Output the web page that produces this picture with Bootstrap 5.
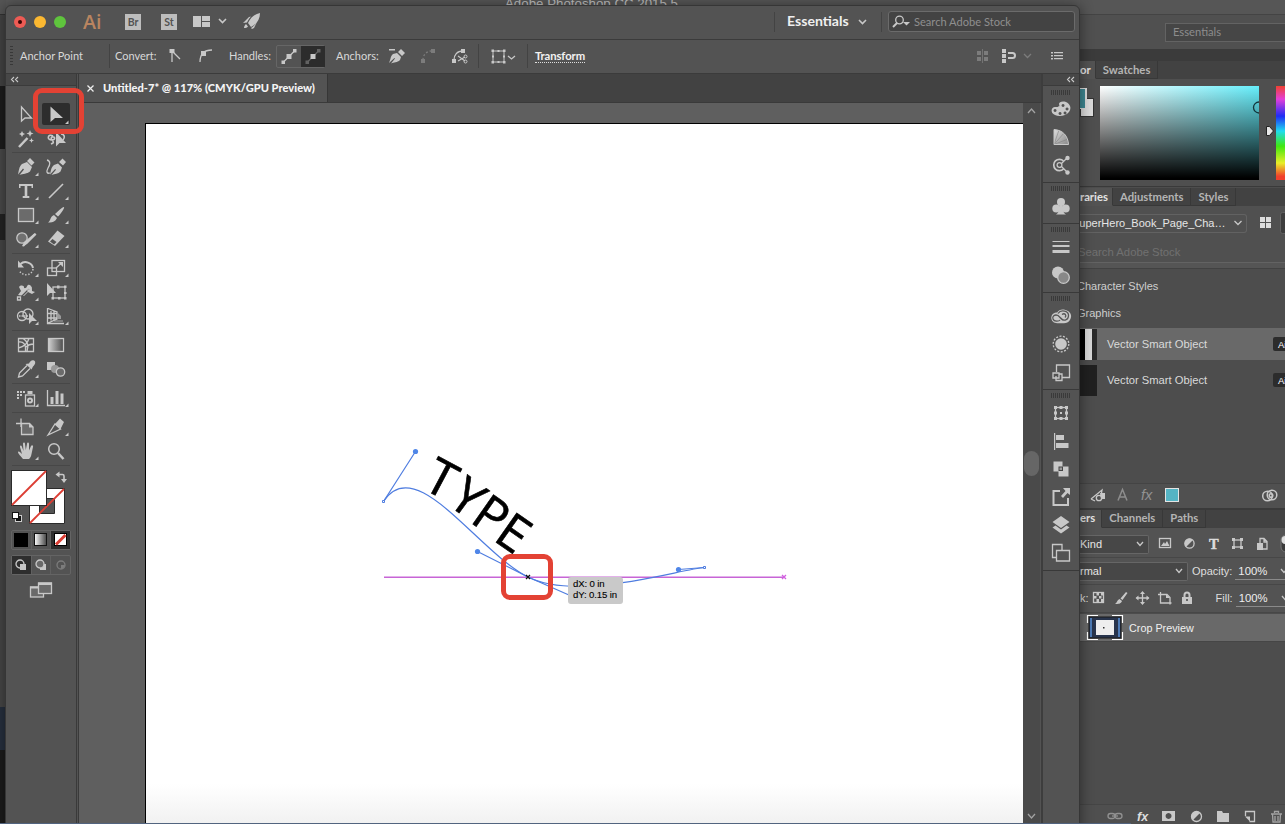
<!DOCTYPE html>
<html lang="en">
<head>
<meta charset="utf-8">
<meta name="viewport" content="width=device-width, initial-scale=1">
<title>Untitled-7</title>
<link rel="stylesheet" href="https://cdn.jsdelivr.net/npm/bootstrap@5.3.0/dist/css/bootstrap.min.css">
<style>
:root{--ink:#c8c8c8;--panel:#535353;--dark:#424242;--line:#3b3b3b}
html,body{height:100%}
body{background:#4b4b4b;font-family:Lato,"Open Sans",sans-serif;font-size:11.3px;line-height:14px;color:#dedede;overflow:hidden;position:relative;margin:0}
svg{display:block;flex:none;overflow:visible}
svg.ic{fill:var(--ink);stroke:none}
.s{fill:none;stroke:var(--ink);stroke-width:1.3}
.s2{fill:none;stroke:var(--ink);stroke-width:2}
.bgf{fill:var(--panel)}
.dim{opacity:.35}
.no-shrink>*{flex:none}
/* windows */
.back-win{position:absolute;inset:0}
.front-win{position:absolute;left:5px;top:5px;width:1075px;height:830px;background:var(--panel);border:1px solid #363636;border-radius:6px 6px 0 0;box-shadow:0 0 14px rgba(0,0,0,.45);overflow:hidden}
.bluebar{position:absolute;left:0;top:823px;width:1131px;height:1px;background:#52647f}
/* left sliver */
.sliver{width:6px}
.sliver div{flex:none}
.k1{height:14px;background:#565656}.k2{height:72px;background:#444;border-top:1px solid #333}.k3{height:63px;background:#1d1d1d}.k4{height:65px;background:#4b4b4b}.k5{height:26px;background:#242424}.k6{height:467px;background:#474747}.k7{height:43px;background:#27303f}.k8{height:74px;background:#1c1c1c}
/* title bar */
.titlebar{height:34px;border-bottom:1px solid var(--line);padding-bottom:1px}
.dot{width:12px;height:12px;border-radius:50%;margin-right:8px}
.dot.r{background:#ee5b54;margin-left:8px;display:flex;align-items:center;justify-content:center}
.dot.r::after{content:"";width:4px;height:4px;border-radius:50%;background:#3a0503}
.dot.y{background:#fbb831}.dot.g{background:#5fc43d}
.ai{font:600 20.5px/20px "Open Sans",sans-serif;color:#b98560;width:20px;margin-left:9px;margin-top:-3px;transform:scaleX(.96);transform-origin:0 50%}
.appbox{width:16px;height:16px;background:#bdbdbd;color:#535353;font:700 10.5px/17px Lato,sans-serif;text-align:center;margin-top:-1px}
.m-br{margin-left:22px}.m-st{margin-left:20px}.m-lay{margin-left:16px;margin-top:-3px}.m-chev{margin-left:8px;margin-top:-2px}.m-rk{margin-left:15px;margin-top:-2px}
.vsep{width:1px;height:20px;background:#434343}
.vsep.tall{height:24px}
.m-s1{margin-left:513px}
.ess{font-weight:700;font-size:14.1px;margin-left:12px;width:64px;color:#efefef;margin-top:-2px}
.m-c2{margin-left:7px}.m-s2{margin-left:14px}
.stock{width:187px;height:21px;border:1px solid #6b6b6b;border-radius:3px;background:#434343;margin-left:6px;color:#8f8f8f;padding-left:4px;margin-top:-1px}
.stock span{margin-left:4px;font-size:11.1px}
/* control bar */
.ctl{height:34px;border-bottom:1px solid var(--line);color:#d8d8d8;font-size:11.2px;padding-bottom:1px}
.grip-v{width:3px;height:20px;margin-left:4px;background:repeating-linear-gradient(#383838 0 1px,transparent 1px 3px)}
.c-ap{margin-left:7px;width:89px;font-size:11px}.c-cv{margin-left:5px;width:51px;font-size:11px}.c-i1{margin-left:2px}.c-i2{margin-left:13px}.c-hd{margin-left:14px;width:47px;font-size:11px}
.toggle{width:49px;height:23px;border:1px solid #666;border-radius:2px;margin-left:0}
.toggle div{width:24px;height:21px}
.toggle .on{background:#2c2c2c}
.c-an{margin-left:11px;width:51px;font-size:11px}.c-p{margin-left:1px}.c-d{margin-left:14px}.c-sc{margin-left:15px}.c-s3{margin-left:10px}.c-bx{margin-left:11px}.c-s4{margin-left:11px}
.c-tr{margin-left:7px;color:#f2f2f2;font-weight:700;font-size:11.3px;line-height:13px;border-bottom:1px dotted #ddd;letter-spacing:-.1px}
.c-g{margin-left:390px}.c-mg{margin-left:11px}.c-ch{margin-left:6px}.c-mn{margin-left:19px}
/* tools */
.tools{width:71px;border-right:1px solid #3a3a3a;flex:none}
.strip-head{height:12px;background:#474747;border-bottom:1px solid var(--line);flex:none}
.tools .grp{display:grid;grid-template-columns:30px 30px;grid-auto-rows:24px;margin-left:5px}
.tools .rule{height:1px;margin:2px 6px;background:#474747;flex:none}
.tools .first{margin-top:17px;margin-bottom:-1px}
.swapbox{margin:2px 0 0 5px}
.modes{width:60px;height:20px;margin:6px 0 0 5px;border:1px solid #646464;border-radius:2px}
.modes>div{width:19.33px;flex:1;display:flex;align-items:center;justify-content:center}
.modes>div+div{border-left:1px solid #606060}
.modes .sel{background:#2e2e2e}
.modes.draws{margin-top:5px}
/* document */
.docs{width:963px;border-left:1px solid #3a3a3a;margin-left:1px;flex:none}
.tabbar{height:29px;background:var(--dark);border-bottom:1px solid #3a3a3a;flex:none}
.doctab{width:249px;background:var(--panel);border-right:1px solid #363636;font-weight:700;font-size:11.1px;color:#f4f4f4;padding-left:8px}
.doctab b{margin-left:9px;white-space:nowrap}
.paste{background:#5f5f5f;padding:20px 0 0 66px}
.artboard{width:878px;height:701px;background:linear-gradient(#fff 660px,#f1f1f1 100%);border-left:1px solid #000;border-top:1px solid #000;flex:none}
.vscroll{width:17px;background:#4a4a4a;flex:none;padding-bottom:14px}
.thumb{width:15px;height:25px;border-radius:8px;background:#666}
/* dock */
.dock{width:39px;border-left:2px solid #3d3d3d;flex:none}
.dock .grp{border-bottom:1px solid #393939;padding:0 0 3px}
.grip-h{height:5px;width:20px;margin:3px 8px 1px;background:repeating-linear-gradient(90deg,#3a3a3a 0 1px,transparent 1px 2px)}
.dock .grp svg.ic{margin:0 0 0 4px}
.overlay{position:absolute;left:0;top:0}
.tip{position:absolute;left:568px;top:577px;width:55px;height:27px;background:#c9c9c9;border-radius:3px;color:#000;font:9.6px/11px "Liberation Sans",sans-serif;padding:1px 5px;white-space:nowrap;letter-spacing:-.12px;-webkit-text-stroke:.1px #000}
.halo{position:absolute;border:5px solid #e34234;border-radius:9px}
.h1x{left:33px;top:88px;width:51px;height:46px}
.h2x{left:501px;top:554px;width:52px;height:46px}
/* photoshop panels */
.ps{margin-left:1080px;width:205px;height:824px;font-family:"Liberation Sans",sans-serif;font-size:11px;background:#4d4d4d;overflow:hidden}
.ps>div,.ps>div>*{flex:none}
.ps .tabs{height:18px;background:#424242;font:700 11.3px/17px Lato,sans-serif;color:#b4b4b4}
.ps .tabs span{padding:0 7px;border-right:1px solid #383838;border-bottom:1px solid #383838}
.ps .tabs span.act{background:#535353;border-bottom-color:#535353;color:#e4e4e4;padding:0 4px 0 0}
.ps .tabs span.act.lib{padding-right:4px}
.ps .tabs span.act.lay{padding-right:6px}
.ps .tabs.low{line-height:15px}
.ps-title{height:15px;background:#565656;border-bottom:1px solid #444}
.ps-opt{height:34px;background:#505050;padding:8px 0 0 85px}
.ps-opt div{height:19px;border:1px solid #636363;background:#464646;color:#8d8d8d;width:130px;padding:0 7px;font:11.2px/16px Lato,sans-serif}
.ps-gap{height:12px;background:#3b3b3b}
.ps-color{height:108px;background:#4f4f4f;border-bottom:1px solid #3a3a3a}
.chips{width:14px;height:94px}
.chip1{width:7px;height:21px;margin-top:9px;background:#3e8893;border:solid #ddd;border-width:1px 2px 1px 0}
.chip2{width:14px;height:19px;margin-top:-11px;background:#dcdcdc;border:1px solid #333;position:relative;z-index:-1}
.field{width:159px;height:94px;margin:7px 0 0 6px;background:linear-gradient(to top,#000 2%,transparent),linear-gradient(90deg,#fff,#66eefb)}
.hue{width:12px;height:94px;margin:7px 0 0 7px;background:linear-gradient(#ef4130,#e33fd8 14%,#1f2cf5 32%,#20dcf0 48%,#3fe810 64%,#e8ee28 82%,#f0402c 96%)}
.libtabs{margin-top:1px}
.lib-top{height:34px;background:#505050}
.lib-sel{width:167px;height:19px;border:1px solid #626262;border-left:0;border-radius:0 3px 3px 0;color:#e6e6e6;font-size:11px;white-space:nowrap}
.lib-sel span{width:154px;margin-left:-8px}
.lib-search{height:23px;color:#707070;border-bottom:1px solid #636363;padding:5px 0 0 0;background:#505050;font-size:11.3px;text-indent:-2px}
.lib-gap{height:6px;background:#555;border-bottom:1px solid #424242}
.lib-h{height:27px;line-height:27px;margin-left:-3px;font-size:11px;color:#cfcfcf}
.lib-h.a{height:31px;line-height:34px}
.lrow{height:36px;font-size:11.2px;color:#dadada}
.lrow.hi{height:32px;background:#696969;margin:1px 0 2px}
.lrow .nm{margin-left:10px;width:166px}
.lrow .tag{width:20px;height:14px;background:#2c2c2c;border-radius:2px;font:9.5px/15px "Liberation Sans",sans-serif;padding-left:5px;color:#fff}
.th1{width:17px;height:31px;background:linear-gradient(90deg,#000 5px,#d9d9d9 5px 12px,#2b2b2b 12px)}
.th2{width:17px;height:31px;background:#202020}
.ps-blank{height:86px;border-bottom:1px solid #444}
.ps-foot{height:26px;background:#505050;border-bottom:2px solid #3a3a3a}
.pr{height:27px;background:#535353;border-bottom:1px solid #474747}
.pr .selbox{height:19px;background:#474747;border:1px solid #666;border-left:0;border-radius:0 2px 2px 0;line-height:17px;color:#e8e8e8}
.pr.kind{height:30px;padding-top:3px}
.pr.lock{height:28px;padding-bottom:1px}
.kindbox{width:69px}.nrmbox{width:108px}
.val{border-bottom:1px solid #8a8a8a;width:52px;height:17px;margin-left:3px;padding-left:3px;font-size:11.3px;line-height:16px;color:#eee}
.layer{height:28px;background:#696969;border-bottom:1px solid #464646;color:#f0f0f0;margin-top:1px;font-size:10.8px}
.layer span{margin-left:6px}
.cropth{width:36px;height:25px;margin-left:7px}
.ps-last{height:20px;border-top:1px solid #454545;background:#4f4f4f}
.ps-space{height:162px}
.top-cap{position:absolute;left:505px;top:-4px;font:13.3px/16px "Liberation Sans",sans-serif;color:#c4c4c4}
.top-strip{position:absolute;left:0;top:0;width:1285px;height:15px;background:#595959}
</style>
</head>
<body>
<div class="back-win d-flex">
  <div class="top-strip"></div>
  <div class="sliver d-flex flex-column position-absolute"><div class="k1"></div><div class="k2"></div><div class="k3"></div><div class="k4"></div><div class="k5"></div><div class="k6"></div><div class="k7"></div><div class="k8"></div></div>
  <div class="top-cap">Adobe Photoshop CC 2015.5</div>

  <div class="ps d-flex flex-column position-relative">
    <div class="ps-title"></div>
    <div class="ps-opt"><div>Essentials</div></div>
    <div class="ps-gap"></div>
    <div class="tabs d-flex"><span class="act">or</span><span>Swatches</span></div>
    <div class="ps-color d-flex position-relative z-0">
      <div class="chips"><div class="chip1"></div><div class="chip2"></div></div>
      <div class="field"></div>
      <svg class="ic" width="10" height="108"><path d="M7.500 47.500h3l4 4.500l-4 4.500h-3z" fill="#e6e6e6" stroke="#222"/><path d="M0 23a5.500 5.500 0 0 0 0 11" fill="none" stroke="#12343a" stroke-width="1.300"/></svg>
      <div class="hue"></div>
    </div>
    <div class="tabs libtabs d-flex"><span class="act lib">raries</span><span>Adjustments</span><span>Styles</span></div>
    <div class="lib-top d-flex align-items-center">
      <div class="lib-sel d-flex align-items-center"><span>SuperHero_Book_Page_Cha…</span><svg class="ic ms-2" width="8" height="8"><path class="s" d="M.5 2l3.500 3.500L7.500 2"/></svg></div>
      <svg class="ic ms-2" width="24" height="14"><path d="M5 1h5v5H5zM11 1h5v5h-5zM5 7h5v5H5zM11 7h5v5h-5z" fill="#dcdcdc"/></svg>
      <svg width="10" height="24"><rect x="1.500" y="1.500" width="20" height="21" rx="2" fill="#3d3d3d" stroke="#606060"/></svg>
    </div>
    <div class="lib-search">Search Adobe Stock</div>
    <div class="lib-gap"></div>
    <div class="lib-h a">Character Styles</div>
    <div class="lib-h">Graphics</div>
    <div class="lrow hi d-flex align-items-center"><div class="th1"></div><div class="nm">Vector Smart Object</div><div class="tag">Ai</div></div>
    <div class="lrow d-flex align-items-center"><div class="th2"></div><div class="nm">Vector Smart Object</div><div class="tag">Ai</div></div>
    <div class="ps-blank"></div>
    <div class="ps-foot d-flex align-items-center">
      <svg class="ic" width="205" height="22" viewBox="1080 485 205 22">
        <path class="s" d="M1091 499l11-9-1 6M1091 499l4 2"/><circle cx="1099" cy="498" r="2.700" class="s"/><path d="M1100 493h5v6h-4z"/>
        <path d="M1118 500.500l4.500-11 4.500 11M1119.500 497h6" fill="none" stroke="#8d8d8d" stroke-width="1.500"/>
        <text x="1141" y="500" font-family="Liberation Sans" font-style="italic" font-size="14.500" fill="#929292">fx</text>
        <rect x="1165.500" y="488.500" width="13" height="13" fill="#55b4c4" stroke="#e4e4e4"/>
        <g class="s2" style="stroke-width:1.500"><circle cx="1267.500" cy="496" r="4.800"/><circle cx="1272" cy="495" r="4.800"/><circle cx="1271" cy="495.500" r="1.800"/></g>
      </svg>
    </div>
    <div class="tabs low d-flex"><span class="act lay">ers</span><span>Channels</span><span>Paths</span></div>
    <div class="pr kind d-flex align-items-center">
      <div class="selbox kindbox d-flex align-items-center justify-content-between pe-1">Kind<svg class="ic" width="8" height="8"><path class="s" d="M1 2l3 3.500L7 2"/></svg></div>
      <svg class="ic" width="136" height="20" viewBox="1149 535 136 20">
        <rect class="s" x="1159.500" y="539.500" width="11" height="9"/><path d="M1161 547l3-4 1 2 2-3 2.500 5z"/>
        <circle cx="1189.500" cy="544.500" r="4.600" class="s"/><path d="M1186 548a5 5 0 0 1 0-7 5 5 0 0 1 7 0z"/>
        <text x="1209" y="549.500" font-family="Liberation Serif" font-weight="700" font-size="14.500" fill="#ddd" stroke="#ddd" stroke-width=".4">T</text>
        <rect class="s" x="1234" y="541" width="7" height="7"/><path d="M1232 539h3v3h-3zM1240 539h3v3h-3zM1232 547h3v3h-3zM1240 547h3v3h-3z"/>
        <path class="s" d="M1260 544v-4.500h4l3 3v7.500h-4M1264 540v3h3"/><path d="M1257 544h6v7h-6z"/>
        <rect x="1281" y="536" width="14" height="17" rx="5" fill="#3b3b3b" stroke="#777"/><circle cx="1285.500" cy="541" r="4" fill="#ddd"/>
      </svg>
    </div>
    <div class="pr d-flex align-items-center"><div class="selbox nrmbox d-flex align-items-center justify-content-between pe-1">rmal<svg class="ic" width="8" height="8"><path class="s" d="M1 2l3 3.500L7 2"/></svg></div><span class="ms-1">Opacity:</span><div class="val d-flex justify-content-between">100%<svg class="ic mt-1" width="7" height="8"><path class="s" d="M1 2l3 3.500L7 2"/></svg></div></div>
    <div class="pr lock d-flex align-items-center"><span>k:</span>
      <svg class="ic" width="127" height="20" viewBox="1089 589 127 20">
        <rect class="s" x="1093.500" y="593.500" width="10" height="10"/><path d="M1096.500 594h2.500v2.500h-2.500zM1101 594h2v2.500h-2zM1094 597h2.500v2.500h-2.500zM1099 597h2.500v2.500h-2.500zM1096.500 600h2.500v3h-2.500zM1101 600h2v3h-2z"/>
        <path d="M1126 593l1.500 1-5 7-2-1.500zM1119.500 600l2.500 2c-1 3-4 3-7 3 2-1 2-4 4.500-5z"/>
        <path class="s" d="M1142.500 593v12M1136.500 599h12"/><path d="M1142.500 592l2.500 3h-5zM1142.500 606l2.500-3h-5zM1135.500 599l3-2.500v5zM1149.500 599l-3-2.500v5z"/>
        <path class="s" d="M1160.500 593v11h11M1158 595.500h9l3 3v7"/><path d="M1166 595l4 4h-4z"/>
        <path d="M1182 598h10v7h-10z"/><path class="s2" d="M1184.500 598v-2a2.500 2.500 0 0 1 5 0v2"/><circle cx="1187" cy="601" r="1" fill="#444"/>
      </svg>
      <span>Fill:</span><div class="val d-flex justify-content-between">100%<svg class="ic mt-1" width="7" height="8"><path class="s" d="M1 2l3 3.500L7 2"/></svg></div></div>
    <div class="layer d-flex align-items-center">
      <svg class="cropth" viewBox="0 0 36 25"><rect x="2" y="2" width="32" height="21" fill="#28344c" stroke="#1b1b1b"/><path d="M3 3h2v19H3zM31 3h2v19h-2z" fill="#4d7ab5"/><rect x="9" y="5" width="18" height="15" fill="#eee"/><path d="M16 12h1.500v1.500h-1.500z" fill="#333"/><path d="M.5 8V.5H11M25 .5h10.500V8M35.500 17v7.500H25M11 24.500H.5V17" fill="none" stroke="#fff" stroke-width="1.200"/></svg>
      <span>Crop Preview</span>
    </div>
    <div class="ps-space"></div>
    <div class="ps-last">
      <svg class="ic" width="205" height="19" viewBox="1080 805 205 19">
        <g opacity=".55"><rect class="s" x="1108" y="813.500" width="7" height="5" rx="2.500"/><rect class="s" x="1115" y="813.500" width="7" height="5" rx="2.500"/><path class="s" d="M1112 816h6"/></g>
        <text x="1137" y="820.500" font-family="Liberation Sans" font-style="italic" font-weight="700" font-size="12.500" fill="#ddd">fx</text>
        <path fill-rule="evenodd" d="M1162 811h13v10h-13zM1168.500 813a3 3 0 1 0 .1 0z"/>
        <circle cx="1196.500" cy="816.500" r="5" class="s"/><path d="M1193 820a5 5 0 0 1 0-7 5 5 0 0 1 7 0z"/>
        <path d="M1217 811h5l1 2h6v9h-12z"/>
        <path class="s" d="M1245.500 816v-4.500h9v10h-5"/><path d="M1245 816.500h5v5z"/>
        <g opacity=".7"><path class="s" d="M1271 814h11M1274.500 813v-1.500h4v1.500M1272.500 814l.5 8h7l.5-8M1275 816v5M1278 816v5"/></g>
      </svg>
    </div>
  </div>
</div>

<div class="front-win d-flex flex-column">
  <div class="titlebar d-flex align-items-center no-shrink">
    <div class="dot r"></div><div class="dot y"></div><div class="dot g"></div>
    <div class="ai">Ai</div>
    <div class="appbox m-br">Br</div><div class="appbox m-st">St</div>
    <svg class="ic m-lay" width="17" height="14"><path d="M0 2h8v11H0zM9 2h8v5H9zM9 8h8v5H9z"/></svg>
    <svg class="ic m-chev" width="9" height="8"><path class="s" d="M1 2l3.500 3.500L8 2" style="stroke-width:1.600"/></svg>
    <svg class="ic m-rk" width="19" height="18" viewBox="0 0 19 18"><path d="M18 1c0 6-3 11-9 14L6 11c3-6 7-9 12-10zM7 5L1 11l4-.5c1-2 2-4 4-6zM15 10c-1 2-4 5-6 6l1 1 2-1zM4 12c-1 1-2 2-2 4 2 0 3 0 4-1.500z"/></svg>
    <div class="vsep m-s1"></div>
    <div class="ess">Essentials</div>
    <svg class="ic m-c2" width="9" height="8"><path class="s" d="M1 2l3.500 3.500L8 2" style="stroke-width:1.600"/></svg>
    <div class="vsep m-s2"></div>
    <div class="stock d-flex align-items-center"><svg class="ic" width="17" height="14"><circle cx="6.500" cy="5" r="3.800" class="s"/><path class="s2" d="M4 8l-4 4"/><path d="M10 7h7l-3.500 3.500z"/></svg><span>Search Adobe Stock</span></div>
  </div>

  <div class="ctl d-flex align-items-center no-shrink">
    <div class="grip-v"></div>
    <div class="c-ap">Anchor Point</div><div class="vsep tall"></div>
    <div class="c-cv">Convert:</div>
    <svg class="ic c-i1" width="16" height="16"><path class="s" d="M4 2v12M4 3l8 8"/><path d="M1.500 1h5v4h-5z"/></svg>
    <svg class="ic c-i2" width="18" height="16"><path class="s" d="M3 14c0-8 4-12 12-12"/><path d="M4 3h5v5H4z"/></svg>
    <div class="c-hd">Handles:</div>
    <div class="toggle d-flex"><div><svg class="ic" width="24" height="21" viewBox="-12 -10.500 24 21"><path class="s" d="M-6 6L6-6"/><path d="M-2.500-2.500h5v5h-5zM-7.500 4h3.500v3.500h-3.500zM4-7.500h3.500V-4H4z"/></svg></div><div class="on"><svg class="ic" width="24" height="21" viewBox="-12 -10.500 24 21"><g class="dim"><path class="s" d="M-6 6L6-6"/><path d="M-7.500 4h3.500v3.500h-3.500zM4-7.500h3.500V-4H4z"/></g><path d="M-2.500-2.500h5v5h-5z"/></svg></div></div>
    <div class="c-an">Anchors:</div>
    <svg class="ic c-p" width="18" height="18"><path d="M1 2h6v1.500H1zM1 16c2-4 1-6 4-9l4-1 4 4-1 3c-3 3-6 2-9 3.500l4-5-.6-.6zM10 5l3-3 4 4-3 3z"/></svg>
    <svg class="ic c-d dim" width="16" height="16"><path class="s" d="M3 12c0-5 3-9 9-9" stroke-dasharray="2 2" /><path d="M1 11h4v4H1zM11 1h4v4h-4z"/></svg>
    <svg class="ic c-sc" width="17" height="17"><path class="s" d="M3 12c0-5 3-9 9-9"/><path d="M1 11h4v4H1zM10 1h4v4h-4z"/><path class="s" d="M7 8l7 5M7 13l7-4" style="stroke-width:1.100"/><circle class="s" cx="14.500" cy="8.500" r="1.500" style="stroke-width:1"/><circle class="s" cx="14.500" cy="13.500" r="1.500" style="stroke-width:1"/></svg>
    <div class="vsep tall c-s3"></div>
    <svg class="ic c-bx" width="26" height="16"><rect class="s" x="3" y="3" width="11" height="11" style="stroke-width:1"/><path d="M1.500 1.500H4V4H1.500zM7.500 2h2v2h-2zM13 1.500h2.500V4H13zM2 7.500h2v2H2zM13 7.500h2v2h-2zM1.500 13H4v2.500H1.500zM7.500 13h2v2h-2zM13 13h2.500v2.500H13z"/><path class="s" d="M18 8l3.500 3L25 8"/></svg>
    <div class="vsep tall c-s4"></div>
    <div class="c-tr">Transform</div>
    <svg class="ic c-g dim" width="15" height="14"><path d="M2 2h4v4H2zM9 2h4v4H9zM2 8h4v4H2zM9 8h4v4H9zM7.200 0h.8v14h-.8z"/></svg>
    <svg class="ic c-mg" width="16" height="16"><path d="M1 1h4v4H1zM1 6h4v4H1zM1 11h4v4H1z"/><path class="s2" d="M7 5h4.500a2.500 2.500 0 0 1 0 5H7"/></svg>
    <svg class="ic c-ch dim" width="9" height="8"><path class="s" d="M1 2l3.500 3.500L8 2"/></svg>
    <svg class="ic c-mn" width="12" height="10"><path d="M0 1h2v1.500H0zM3 1h9v1.200H3zM0 4h2v1.500H0zM3 4h9v1.200H3zM0 7h2v1.500H0zM3 7h9v1.200H3z"/></svg>
  </div>

  <div class="d-flex flex-fill">
    <div class="tools d-flex flex-column">
      <div class="strip-head"><svg class="ic ms-1" width="12" height="11"><path class="s" d="M4 3L1.500 5.500 4 8M8 3L5.500 5.500 8 8" style="stroke-width:1.100"/></svg></div>
      <div class="grp first">
        <svg class="ic" width="30" height="24" viewBox="-15 -12 30 24"><path class="s" d="M-4.500-8v14L-1 3h6.500z"/></svg>
        <svg class="ic" width="30" height="24" viewBox="-15 -12 30 24"><rect x="-14" y="-12" width="28" height="22" rx="2" fill="#2d2d2d"/><path d="M-5.500-8.500V7L-1 3h8zM12.500 5.500V9H9z"/></svg>
        <svg class="ic" width="30" height="24" viewBox="-15 -12 30 24"><path class="s2" d="M-7 8L1.500-1" style="stroke-width:2.500"/><path d="M-4-8l1 2 2 1-2 1-1 2-1-2-2-1 2-1zM4-9l1 2.500 2.500 1L5-4.500 4-2l-1-2.500L.5-5.500 3-6.500zM5.500-1l.7 1.800 1.800.7-1.800.7L5.500 4l-.7-1.800L3 1.500l1.800-.7z"/></svg>
        <svg class="ic" width="30" height="24" viewBox="-15 -12 30 24"><path class="s" d="M-3-3c-5-3-7 4-1 4 4 0 3-4 0-3-3 2 3 4 1 6l-2 1M5-5c4 0 4 4 2 6" style="stroke-width:1.600"/><path d="M0-7V7.500L3.500 4H10z"/></svg>
      </div>
      <div class="rule"></div>
      <div class="grp">
        <svg class="ic" width="30" height="24" viewBox="-15 -12 30 24"><path d="M-8 7.500c1-4 1-8 4-10.500L1-5l5 5-2 4.500C1 7-3 6.500-6.500 8l4.500-5.500L-3 1.600zM1-6l3-3 4.500 4.500-3 3zM12.500 5.500V9H9z"/></svg>
        <svg class="ic" width="30" height="24" viewBox="-15 -12 30 24"><path class="s" d="M-9-7c4 1 3 5 1 8-2 4-1 6 2 5"/><path d="M-6 7.500c1-4 1-7 4-9.500l4-1.500 4 4-1.500 4C2 7-1 6.500-4.500 8L0 2.800-.8 2zM3-5l3.500-3.500L10-5 7-1.500z"/></svg>
        <svg class="ic" width="30" height="24" viewBox="-15 -12 30 24"><path d="M-7-7H7v4H5.500v-2H1.300V5h2V7h-6.600V5h2V-5h-4.200v2H-7zM12.500 5.500V9H9z"/></svg>
        <svg class="ic" width="30" height="24" viewBox="-15 -12 30 24"><path class="s2" d="M-7 7L7-7" style="stroke-width:1.600"/><path d="M12.500 5.500V9H9z"/></svg>
        <svg class="ic" width="30" height="24" viewBox="-15 -12 30 24"><rect class="s" x="-7.500" y="-6.500" width="15" height="13" style="fill:#6b6b6b"/><path d="M12.500 5.500V9H9z"/></svg>
        <svg class="ic" width="30" height="24" viewBox="-15 -12 30 24"><path d="M8-8c1 1-4 8-6 9.500L-1-1c2-2 8-7.500 9-7zM-2 0l3 3c-2 4-5 5-9 4.500 3-2 2-6 6-7.500zM12.500 5.500V9H9z"/></svg>
        <svg class="ic" width="30" height="24" viewBox="-15 -12 30 24"><circle class="s" cx="-4" cy="-1" r="5.200" style="fill:#707070"/><path d="M9-6l1.500 1.500L1 5l-5 2.500L-2 3zM12.500 5.500V9H9z"/><path class="s2" d="M-3 7L9-5"/></svg>
        <svg class="ic" width="30" height="24" viewBox="-15 -12 30 24"><path d="M1.500-8.500L8.500-3-1 7l-7-4.500z"/><path class="bgf" d="M-6 2.500l2.500-2.500 4 3-2.500 2.500z"/><path d="M12.500 5.500V9H9z"/></svg>
      </div>
      <div class="rule"></div>
      <div class="grp">
        <svg class="ic" width="30" height="24" viewBox="-15 -12 30 24"><path class="s2" d="M-5.500-4C-1-8 6-5 7 0"/><path d="M-8-7.500v7h6z"/><path class="s2" d="M7 1C6 8-4 9-7 2" stroke-dasharray="1.300 1.800" style="stroke-width:1.500"/><path d="M12.500 5.500V9H9z"/></svg>
        <svg class="ic" width="30" height="24" viewBox="-15 -12 30 24"><rect class="s" x="-8.500" y="0" width="9" height="7.500"/><rect class="s" x="-4" y="-7.500" width="12.500" height="11"/><path class="s" d="M0 0l5-4.500"/><path d="M2-6h5v5zM12.500 5.500V9H9z"/></svg>
        <svg class="ic" width="30" height="24" viewBox="-15 -12 30 24"><path d="M-7-5c2-3 6-1 5 1 3 1 3-3 4-3 3-1 4 3 4 6l3 1-3 2-4-2-4 4-6-1 3-4z"/><path class="s" d="M-7 7L3-3" style="stroke:#535353"/><path class="s" d="M-8.500 5h3v3h-3zM2-4.500h3v3H2z"/><path d="M12.500 5.500V9H9z"/></svg>
        <svg class="ic" width="30" height="24" viewBox="-15 -12 30 24"><rect class="s" x="-3" y="-5" width="12" height="11"/><path d="M-9-9V4l3-3h6zM1-6.500h2.500v3H1zM8-6.500h2.500V-4H8zM8 0h2.500v2H8zM8 5h2.500v2.500H8zM2 5h2.500v2.500H2zM-4.500 5H-2v2.500h-2.500z"/></svg>
        <svg class="ic" width="30" height="24" viewBox="-15 -12 30 24"><circle class="s" cx="-4" cy="0" r="4.500"/><circle class="s" cx="2" cy="-2" r="5"/><path class="s" d="M-7 0H2" stroke-dasharray="1.500 1"/><path d="M3-3V8l3-3h5zM12.500 5.500V9H9z"/></svg>
        <svg class="ic" width="30" height="24" viewBox="-15 -12 30 24"><path class="s" d="M-8.500-8v15.500H8M-8-7.500L1-4v7l-9 4M-5-6.500v11M-2-5v9M-8-2.500h9M-8 2h9" /><path d="M2-3l3 3v3H2z" opacity=".6"/><path class="s" d="M-2 5h9" opacity=".6"/><path d="M12.500 5.500V9H9z"/></svg>
      </div>
      <div class="rule"></div>
      <div class="grp">
        <svg class="ic" width="30" height="24" viewBox="-15 -12 30 24"><path class="s" d="M-7.500-6.500h15v13h-15zM-7.500-3c5-1 8 3 7 9.500M-3-6.500c5 3 6 7 4 13M-7.500 3C-3 2 1 0 3-6.500M0 2c3-3 5-3 7.500-3"/></svg>
        <svg class="ic" width="30" height="24" viewBox="-15 -12 30 24"><defs><linearGradient id="gr"><stop stop-color="#d0d0d0"/><stop offset="1" stop-color="#4a4a4a"/></linearGradient></defs><rect class="s" x="-7.500" y="-6.500" width="15" height="13" style="fill:url(#gr)"/></svg>
        <svg class="ic" width="30" height="24" viewBox="-15 -12 30 24"><path class="s" d="M1-3.500L-6.500 4l-1 4 4-1L4-.5"/><path d="M8-8.500c2 1 1.500 4-1 6l-1.500 3L-.5-5l3.500-.5C4-8 6-9.500 8-8.500zM12.500 5.500V9H9z"/></svg>
        <svg class="ic" width="30" height="24" viewBox="-15 -12 30 24"><path d="M-9-7h8v8h-8z"/><circle cx="-1" cy="0" r="4" fill="#999"/><circle class="s" cx="4.500" cy="3" r="4.200" style="fill:#6b6b6b"/></svg>
      </div>
      <div class="rule"></div>
      <div class="grp">
        <svg class="ic" width="30" height="24" viewBox="-15 -12 30 24"><rect class="s" x="-.5" y="-3" width="9" height="11"/><circle class="s2" cx="4" cy="2.500" r="2"/><path d="M1.500-7h5v3h-5zM-9-7h2v2h-2zM-6-7h2v2h-2zM-3-7h2v2h-2zM-9-4h2v2h-2zM-6-4h2v2h-2zM-9-1h2v2h-2zM12.500 5.500V9H9z"/></svg>
        <svg class="ic" width="30" height="24" viewBox="-15 -12 30 24"><path class="s" d="M-8.500-8V7.500H9"/><path d="M-5.500-1h3v7h-3zM-.5-7h3V6h-3zM4.500-4.500h3V6h-3zM12.500 5.500V9H9z"/></svg>
      </div>
      <div class="rule"></div>
      <div class="grp">
        <svg class="ic" width="30" height="24" viewBox="-15 -12 30 24"><path class="s" d="M-5-8.500V0M-10-3.500h6"/><path class="s" d="M-4.500-3.500h8L7 0v7.500H-4.500z" style="fill:#6b6b6b"/><path d="M3-4l4.500 4.500H3z"/></svg>
        <svg class="ic" width="30" height="24" viewBox="-15 -12 30 24"><path class="s" d="M-8 8L-1-3 4.500 2z"/><path d="M-1-3l5-5.500L8-5 4.500 2zM12.500 5.500V9H9z"/></svg>
        <svg class="ic" width="30" height="24" viewBox="-15 -12 30 24"><path d="M-3 8c-2-3-5-5-5-7 1-1 2 0 4 2L-6-4c0-2 1.500-2 2 0l1.500 4L-3-7c0-2 2-2 2 0l.8 6L1-7c0-2 2-2 2 0v6.500L5-5c1-1.500 2.500-.5 2 1L5.500 3C5 6 4 7 3 8zM12.500 5.500V9H9z"/></svg>
        <svg class="ic" width="30" height="24" viewBox="-15 -12 30 24"><circle class="s" cx="-2" cy="-2" r="5.300" style="stroke-width:1.500"/><path class="s2" d="M2 2l5.500 6" style="stroke-width:2.500"/></svg>
      </div>
      <div class="rule"></div>
      <svg class="swapbox" width="60" height="54" viewBox="11 470 60 54">
        <path d="M29.500 488.500h35v35h-35zM39.500 498.500v15h15v-15z" fill="#fff" fill-rule="evenodd" stroke="#2b2b2b"/><path d="M30 523l34-34" stroke="#dc3d33" stroke-width="1.800"/>
        <rect x="11.500" y="470.500" width="35" height="35" fill="#fff" stroke="#2b2b2b"/><path d="M12 505l34-34" stroke="#dc3d33" stroke-width="1.800"/>
        <path d="M58 474.500h4.500q1.500 0 1.500 1.500v4" class="s2" style="stroke-width:1.600"/><path d="M55.500 474.500l4-3v6zM64 483l-3-4h6z" fill="#c8c8c8"/>
        <rect x="15.500" y="515.500" width="6" height="6" fill="#111" stroke="#ccc"/><rect x="12.500" y="512.500" width="6" height="6" fill="#fff" stroke="#111"/>
      </svg>
      <div class="modes d-flex">
        <div><svg width="14" height="14"><path d="M0 0h14v14H0z"/></svg></div>
        <div><svg width="14" height="14"><rect x=".5" y=".5" width="12" height="12" fill="url(#gr2)" stroke="#111"/><defs><linearGradient id="gr2"><stop stop-color="#fff"/><stop offset="1" stop-color="#444"/></linearGradient></defs></svg></div>
        <div class="sel"><svg width="14" height="14"><rect x=".5" y=".5" width="12" height="12" fill="#fff" stroke="#000"/><path d="M2 11.500L11.500 2" stroke="#dc3d33" stroke-width="3"/></svg></div>
      </div>
      <div class="modes draws d-flex">
        <div class="sel"><svg class="ic" width="12" height="12"><circle class="s" cx="5" cy="5" r="4"/><path d="M5 5h6v6H5z"/></svg></div>
        <div><svg class="ic" width="12" height="12"><path d="M5 5h6v6H5z"/><circle class="s" cx="5" cy="5" r="4" style="fill:#6a6a6a"/></svg></div>
        <div><svg class="ic dim" width="12" height="12"><circle class="s" cx="6" cy="6" r="4"/><path d="M6 6h4c0 2-2 4-4 4z"/></svg></div>
      </div>
      <svg class="ic" width="60" height="26" viewBox="6 575 60 26"><rect class="s" x="30.500" y="587" width="13" height="10" style="fill:#6a6a6a"/><rect class="s" x="38.500" y="583" width="13" height="10.500" style="fill:#6a6a6a"/><path d="M38 582.500h14v2.500H38zM30 586.500h8v2h-8z"/></svg>
    </div>

    <div class="docs d-flex flex-column">
      <div class="tabbar d-flex"><div class="doctab d-flex align-items-center"><svg class="ic" width="7" height="7"><path class="s" d="M.5.500l6 6M6.500.500l-6 6" style="stroke:#eee"/></svg><b>Untitled-7* @ 117% (CMYK/GPU Preview)</b></div></div>
      <div class="d-flex flex-fill">
        <div class="paste"><div class="artboard"></div></div>
        <div class="vscroll d-flex flex-column align-items-center justify-content-between">
          <svg class="ic mt-1" width="9" height="8"><path class="s" d="M1 6l3.500-4L8 6" opacity=".7"/></svg>
          <div class="thumb"></div>
          <svg class="ic" width="9" height="8"><path class="s" d="M1 2l3.500 4L8 2" opacity=".7"/></svg>
        </div>
      </div>
    </div>

    <div class="dock">
      <div class="strip-head d-flex justify-content-end"><svg class="ic me-1" width="10" height="11"><path class="s" d="M4 3L1.500 5.500 4 8M8 3L5.500 5.500 8 8" style="stroke-width:1.100"/></svg></div>
      <div class="grp"><div class="pt-1"></div><div class="grip-h mt-0 mb-0"></div>
        <svg class="ic" width="28" height="28" viewBox="-14 -14 28 28"><path fill-rule="evenodd" d="M-2-5c0-2 3-3 7-2 4 2 6 6 3 10C5 7-2 8-6 6-11 4-10-2-6-2s5 0 4-3zM2-5a1.500 1.500 0 1 0 .1 0zM6-1.500a1.500 1.500 0 1 0 .1 0zM4 2.500a1.500 1.500 0 1 0 .1 0zM-1 3a1.500 1.500 0 1 0 .1 0zM-6 0a1.500 1.500 0 1 0 .1 0z"/></svg>
        <svg class="ic" width="28" height="28" viewBox="-14 -14 28 28"><path d="M-7-7.500C2-7 7-1 7.500 7.500H-7z" fill="url(#gr3)"/><defs><linearGradient id="gr3" y1="0" y2="1"><stop stop-color="#ddd"/><stop offset="1" stop-color="#888"/></linearGradient></defs><path d="M-7 7.500L-2-7M-7 7.500L3-4M-7 7.500L7 2" stroke="#777" stroke-width=".5"/><path class="s" d="M-7-7.500C2-7 7-1 7.500 7.500H-7z" style="stroke-width:1"/></svg>
        <svg class="ic" width="28" height="28" viewBox="-14 -14 28 28"><path class="s" d="M2.500-4a5.700 5.700 0 1 0 0 8" style="stroke-width:1.700"/><circle class="s" cx="-1.500" cy="0" r="2.400"/><path class="s" d="M0-1l6-6M0 1l6 6"/><circle cx="6.500" cy="-7" r="2.200"/><circle cx="6.500" cy="7.500" r="2.200"/></svg>
      </div>
      <div class="grp"><div class="grip-h"></div>
        <svg class="ic" width="28" height="28" viewBox="-14 -14 28 28"><circle cx="0" cy="-4" r="4"/><circle cx="-4.700" cy="2.500" r="4"/><circle cx="4.700" cy="2.500" r="4"/><path d="M-1.500-2h3c0 5 .5 9 3.500 10.500h-10c3-1.500 3.500-5.500 3.500-10.500z"/></svg>
      </div>
      <div class="grp"><div class="grip-h"></div>
        <svg class="ic" width="28" height="28" viewBox="-14 -14 28 28"><path d="M-8.500-6h17v1h-17zM-8.500-2h17V0h-17zM-8.500 3h17v3h-17z"/></svg>
        <svg class="ic" width="28" height="28" viewBox="-14 -14 28 28"><circle cx="-3" cy="-2.500" r="6"/><circle class="s" cx="2.500" cy="2.500" r="5.800" style="fill:#888"/></svg>
      </div>
      <div class="grp"><div class="grip-h"></div>
        <svg class="ic" width="28" height="28" viewBox="-14 -14 28 28"><path d="M-10 2c0-4 3-6 6-6 2-4 7-4 10-2 5 2 6 8 2 12-2 2-4 2-7 2h-5c-3 0-6-2-6-6z" transform="scale(.97 .9)"/><g fill="none" stroke="#555" stroke-width="1.300"><path d="M2.500 4.500l-5.500-5c-3.500-1.500-6 1-5 3.500C-7 6-2 5.500-1 4M-3-2.500C0-7 8-5 7.500 0 7 5 2 5 0 2.500L-1.500 1M1-1.500c3-2 5 1 3 3"/></g></svg>
        <svg class="ic" width="28" height="28" viewBox="-14 -14 28 28"><circle r="5.800"/><circle r="7.800" class="s" stroke-dasharray="2 1.500"/></svg>
        <svg class="ic" width="28" height="28" viewBox="-14 -14 28 28"><path class="s" d="M-4.500 0v-7H8.500V5.500H1M-8 1h6v5h-6zM-5 4v4.500H1V2h-3"/></svg>
      </div>
      <div class="grp"><div class="grip-h"></div>
        <svg class="ic" width="28" height="28" viewBox="-14 -14 28 28"><rect class="s" x="-5.500" y="-5.500" width="11" height="11"/><path d="M-7-7h3v3h-3zM-1.500-7h3v3h-3zM4-7h3v3H4zM-7-1.500h3v3h-3zM-1-1h2v2h-2zM4-1.500h3v3H4zM-7 4h3v3h-3zM-1.500 4h3v3h-3zM4 4h3v3H4z"/></svg>
        <svg class="ic" width="28" height="28" viewBox="-14 -14 28 28"><path d="M-7-8h1.200V9H-7zM-5-6h8v5h-8zM-5 2H7.500v5H-5z"/></svg>
        <svg class="ic" width="28" height="28" viewBox="-14 -14 28 28"><path d="M-7.500-7.500h9v5h6v10h-10v-5h-5z"/><rect x="-2" y="-2" width="3.500" height="3.500" fill="#999" stroke="#444"/></svg>
        <svg class="ic" width="28" height="28" viewBox="-14 -14 28 28"><path class="s2" d="M-1-6h-6.500V8H7V1"/><path d="M2-9h7v7L6.500-4 2 1 .0-1 4.500-6z"/></svg>
        <svg class="ic" width="28" height="28" viewBox="-14 -14 28 28"><path d="M0-9l8.500 6L0 3-8.500-3zM-8.500 2.500L-5.500.5 0 4.500 5.500.5l3 2L0 8.500z"/></svg>
        <svg class="ic" width="28" height="28" viewBox="-14 -14 28 28"><path class="s" d="M-4.500 4.500h-4V-8.500H1v6M-4.500-2.500H8.500V8H-4.500z"/></svg>
      </div>
    </div>
  </div>
</div>

<svg class="overlay" width="1040" height="824">
  <text x="421.100 446 468.700 492" y="487.800 503.500 521.200 539.500" rotate="28 36 35 35" font-family="Open Sans" font-size="50.500" fill="#000" stroke="#000" stroke-width=".6">TYPE</text>
  <rect x="384" y="576.500" width="400" height="1.500" fill="#c765d6"/>
  <g fill="none" stroke="#4f7de0" stroke-width="1.200"><path d="M383.500 501.500C415.500 451.500 477.500 551.500 528 577C578 602 678 569.500 704.500 567.500"/><path d="M383.500 501.500L415.500 451.500M477.500 551.500L528 577L578 599M678.500 569.500L704.500 567.500"/></g>
  <g fill="#4f86e8"><circle cx="415.500" cy="451.500" r="2.600"/><circle cx="477.500" cy="551.500" r="2.600"/><circle cx="678.500" cy="569.500" r="2.600"/></g>
  <path d="M382.500 500.500h2v2h-2zM703.500 566.500h2v2h-2z" fill="#fff" stroke="#4f7de0"/>
  <path d="M526 575l4 4M530 575l-4 4" stroke="#111" stroke-width="1.300"/><path d="M782 575l4 4M786 575l-4 4" stroke="#d25fe0" stroke-width="1.300"/>
</svg>
<div class="tip">dX: 0 in<br>dY: 0.15 in</div>
<div class="halo h1x"></div>
<div class="halo h2x"></div>
<div class="bluebar"></div>
<script src="https://cdn.jsdelivr.net/npm/bootstrap@5.3.0/dist/js/bootstrap.bundle.min.js"></script>
</body>
</html>
